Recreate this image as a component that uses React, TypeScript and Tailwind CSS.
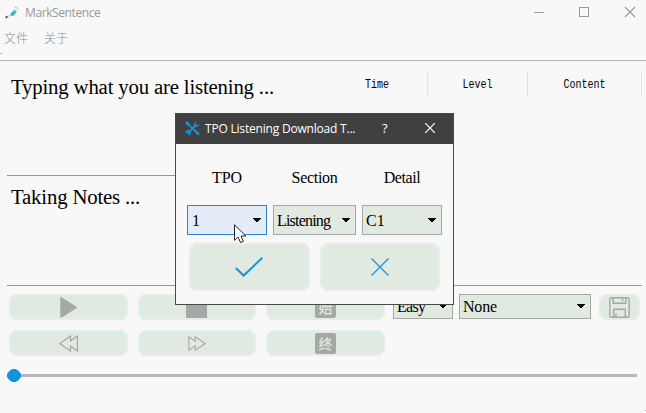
import type { ReactNode } from 'react';

const serif = "font-['Liberation_Serif','Noto_Sans_CJK_SC',serif]";

function SoftButton({ className, children }: { className: string; children?: ReactNode }) {
  return (
    <button
      className={`shrink-0 bg-[#e2efe2] p-[2px] [clip-path:polygon(5px_0,calc(100%-5px)_0,100%_5px,100%_calc(100%-5px),calc(100%-5px)_100%,5px_100%,0_calc(100%-5px),0_5px)] ${className}`}
    >
      <span className="flex h-full w-full items-center justify-center bg-[#e0eae0] [clip-path:polygon(5px_0,calc(100%-5px)_0,100%_5px,100%_calc(100%-5px),calc(100%-5px)_100%,5px_100%,0_calc(100%-5px),0_5px)]">
        {children}
      </span>
    </button>
  );
}

function Combo({
  label,
  className,
  tracking = '',
  active = false,
}: {
  label: string;
  className: string;
  tracking?: string;
  active?: boolean;
}) {
  return (
    <div
      className={`flex shrink-0 items-center justify-between border pr-[5px] text-[16px] leading-none ${serif} ${
        active ? 'border-[#2a84cf] bg-[#e4ecf7] pl-1' : 'border-[#a5a7a5] bg-[#e0eae0] pl-[3px]'
      } ${className}`}
    >
      <span className={`pt-px ${tracking}`}>{label}</span>
      <svg width="8" height="4" viewBox="0 0 8 4" className="mb-px shrink-0" shapeRendering="crispEdges">
        <path d="M0 0h8v1H7v1H6v1H5v1H3V3H2V2H1V1H0z" fill="#000" />
      </svg>
    </div>
  );
}

function GlyphTile({ char }: { char: string }) {
  return (
    <span className="flex h-[21px] w-[21px] items-center justify-center rounded-[2px] bg-[#a6a8a6] pb-px font-['Noto_Sans_CJK_SC',sans-serif] text-[14px] font-medium leading-none text-[#e0eae0]">
      {char}
    </span>
  );
}

function Dialog() {
  return (
    <div className="absolute left-[175px] top-[113px] flex h-[192px] w-[279px] flex-col border border-[#4a4a4a] bg-[#f8f8f8]">
      <div className="flex h-[30px] shrink-0 items-center bg-[#404040] pl-[9px] font-['Open_Sans','Noto_Sans',sans-serif] text-[12px] text-white">
        <svg width="15" height="15" viewBox="0 0 15 15" fill="none" className="mb-[2px] shrink-0">
          <path d="M3 3l9 9" stroke="#1494dc" strokeWidth="1.7" />
          <path d="M.3 1.8L1.8.3l2.6 1.5.3 2L3.6 5 2 4.6z" fill="#1494dc" />
          <path d="M8.9 9.6l1.2-1.2 4.2 3.7c.8 1-1 2.8-2 2z" fill="#1494dc" />
          <path d="M3 12L11 4" stroke="#1494dc" strokeWidth="1.9" />
          <path d="M12.2.4a3.5 3.5 0 0 0-2.9 4.2l1.2 1.2a3.5 3.5 0 0 0 4.2-3l-2 1.4-1.5-.4-.4-1.5z" fill="#1494dc" />
          <path d="M.3 12.2a3.3 3.3 0 0 1 3.3-3.1l2.2 2.2a3.3 3.3 0 0 1-3 3.4l1-1.8-1.3-1.5z" fill="#1494dc" />
        </svg>
        <span className="ml-[5px] w-[170px] whitespace-nowrap text-[12px] tracking-[-0.2px]">TPO Listening Download T...</span>
        <span className="ml-[7px] w-[8px] text-[13px]">?</span>
        <svg width="10" height="10" viewBox="0 0 10 10" className="mb-[2px] ml-[35px]">
          <path d="M0 0l10 10M10 0L0 10" stroke="#fff" strokeWidth="1.2" />
        </svg>
      </div>
      <div className={`flex h-[61px] shrink-0 items-center gap-[6px] pl-[11px] pt-[7px] text-[16px] leading-none ${serif}`}>
        <span className="w-[80px] text-center">TPO</span>
        <span className="w-[83px] text-center tracking-[-0.3px]">Section</span>
        <span className="w-[80px] text-center tracking-[-0.4px]">Detail</span>
      </div>
      <div className="flex gap-[6px] pl-[11px]">
        <Combo label="1" className="h-[30px] w-[80px]" active />
        <Combo label="Listening" className="h-[30px] w-[83px]" tracking="tracking-[-0.8px]" />
        <Combo label="C1" className="h-[30px] w-[80px]" />
      </div>
      <div className="flex gap-[10px] pl-[13px] pt-[8px]">
        <SoftButton className="h-[48px] w-[121px]">
          <svg width="28" height="20" viewBox="0 0 28 20" fill="none" className="mr-[2px]">
            <path d="M.8 11L8.7 18.5 27.3.8" stroke="#1494dc" strokeWidth="2" />
          </svg>
        </SoftButton>
        <SoftButton className="h-[48px] w-[120px]">
          <svg width="18" height="18" viewBox="0 0 18 18" fill="none">
            <path d="M.5 .5l17 17M17.5 .5l-17 17" stroke="#2490d4" strokeWidth="1.2" />
          </svg>
        </SoftButton>
      </div>
      <svg width="13" height="20" viewBox="0 0 13 20" className="absolute left-[58px] top-[110px]">
        <path d="M.5.8v15.5L4 13l2.5 5.5 2.8-1.2L7 12h4.8z" fill="#fff" stroke="#222233" strokeWidth="1" />
      </svg>
    </div>
  );
}

export default function App() {
  return (
    <div className="relative flex h-[413px] w-[646px] flex-col overflow-hidden bg-[#f8f8f8] text-black">
      <header className="flex h-[25px] shrink-0 items-center font-['Open_Sans','Noto_Sans',sans-serif] text-[12px] text-[#999]">
        <svg width="14" height="13" viewBox="0 0 14 13" className="ml-[5px] shrink-0">
          <path d="M5 8L9.7 3.5l2 2.2L9 9.5 6.5 10z" fill="#38b9b5" />
          <path d="M3 9.2L5 8l1.5 2-2.7 1z" fill="#bde5e0" />
          <path d="M0 12.5L1.3 9.5 3.6 11.3z" fill="#454c52" />
          <path d="M10 1.2l2 .8M12.5 2.5l.8 1" stroke="#8adbd3" strokeWidth="1.4" />
          <path d="M9 4.5l2.2 1.8" stroke="#efaaa4" strokeWidth=".7" />
        </svg>
        <span className="ml-[6px] w-[76px] whitespace-nowrap tracking-[-0.4px]">MarkSentence</span>
        <svg width="102" height="12" viewBox="0 0 102 12" fill="none" className="mb-px ml-auto mr-[10px] shrink-0">
          <path d="M0 6.5h10M45.5 1.5h9v9h-9z" stroke="#999" shapeRendering="crispEdges" />
          <path d="M91 1l10 10M101 1L91 11" stroke="#999" strokeWidth="1.1" />
        </svg>
      </header>
      <nav className="flex h-[35px] shrink-0 gap-[16px] pl-[4px] pt-[5px] font-['Noto_Sans_CJK_SC',sans-serif] text-[12px] font-light leading-[16px] text-[#8d8d8d]">
        <span>文件</span>
        <span>关于</span>
      </nav>
      <main className="flex h-[226px] shrink-0 border-t border-[#b5b5b5]">
        <section className={`flex w-[327px] flex-col pl-[7px] text-[20.8px] leading-[24px] tracking-[-0.18px] ${serif}`}>
          <div className="h-[115px] border-b border-[#5aa5ec] pl-[4px] pt-[14px]">Typing what you are listening ...</div>
          <div className="h-[110px] border-b border-[#5aa5ec] pl-[4px] pt-[9px]">Taking Notes ...</div>
        </section>
        <section className="mr-[4px] flex-1 border-b border-[#5aa5ec] pt-[11px]">
          <div className="flex h-[24px] text-center font-['Liberation_Mono',monospace] text-[10px] leading-[25px]">
            <span className="w-[101px] border-r border-[#dfe4e2]">
              <span className="inline-block scale-y-[1.2]">Time</span>
            </span>
            <span className="w-[100px] border-r border-[#dfe4e2]">
              <span className="inline-block scale-y-[1.2]">Level</span>
            </span>
            <span className="w-[114px] border-r border-[#dfe4e2]">
              <span className="inline-block scale-y-[1.2]">Content</span>
            </span>
          </div>
        </section>
      </main>
      <footer className="flex flex-col pl-[9px] pt-[8px]">
        <div className="flex">
          <SoftButton className="h-[26px] w-[119px]">
            <svg width="17" height="21" viewBox="0 0 17 21">
              <path d="M1 .8L16 10.5 1 20z" fill="#a6a8a6" stroke="#a6a8a6" strokeWidth="1.5" strokeLinejoin="round" />
            </svg>
          </SoftButton>
          <SoftButton className="ml-[10px] h-[26px] w-[118px]">
            <span className="mr-px h-[21px] w-[21px] bg-[#a6a8a6]" />
          </SoftButton>
          <SoftButton className="ml-[10px] h-[26px] w-[119px]">
            <GlyphTile char="始" />
          </SoftButton>
          <Combo label="Easy" className="ml-[8px] h-[25px] w-[60px]" tracking="tracking-[-0.7px]" />
          <Combo label="None" className="ml-[6px] h-[25px] w-[132px]" tracking="tracking-[-0.2px]" />
          <SoftButton className="ml-[8px] h-[26px] w-[41px]">
            <svg width="21" height="21" viewBox="0 0 21 21" fill="none" stroke="#a6a8a6" strokeWidth="1.4">
              <rect x=".8" y=".8" width="19.4" height="19.4" rx="1.5" />
              <path d="M4.2 1v5.3h12.6V1M4.7 20v-7.8h11.6V20M7 16.5V20M13.5 1v3" />
            </svg>
          </SoftButton>
        </div>
        <div className="mt-[10px] flex gap-[10px]">
          <SoftButton className="h-[26px] w-[119px]">
            <svg width="19" height="17" viewBox="0 0 19 17" fill="none" stroke="#a6a8a6" strokeWidth="1.2">
              <path d="M.8 8.5L11.5 1v4.8L18.4 1v15l-6.9-4.8V16z" />
            </svg>
          </SoftButton>
          <SoftButton className="h-[26px] w-[118px]">
            <svg width="18" height="15" viewBox="0 0 18 15" fill="none" stroke="#a6a8a6" strokeWidth="1.1">
              <path d="M17.2 7.5L7.2.8v4.5L.8.8v13.4l6.4-4.5v4.5z" />
            </svg>
          </SoftButton>
          <SoftButton className="h-[26px] w-[119px]">
            <GlyphTile char="终" />
          </SoftButton>
        </div>
        <div className="-ml-[2px] mt-[13px] flex h-[13px] items-center">
          <span className="h-[13px] w-[14px] bg-[#1494dc] [clip-path:polygon(38%_0,62%_0,82%_14%,100%_38%,100%_62%,82%_86%,62%_100%,38%_100%,18%_86%,0_62%,0_38%,18%_14%)]" />
          <span className="h-[3px] w-[616px] bg-[#b7b8b7]" />
        </div>
      </footer>
      <span className="absolute left-0 top-[53px] h-px w-[2px] bg-[#b5b5b5]" />
      <span className="absolute bottom-[2px] right-0 h-px w-px bg-[#aaa]" />
      <Dialog />
    </div>
  );
}
